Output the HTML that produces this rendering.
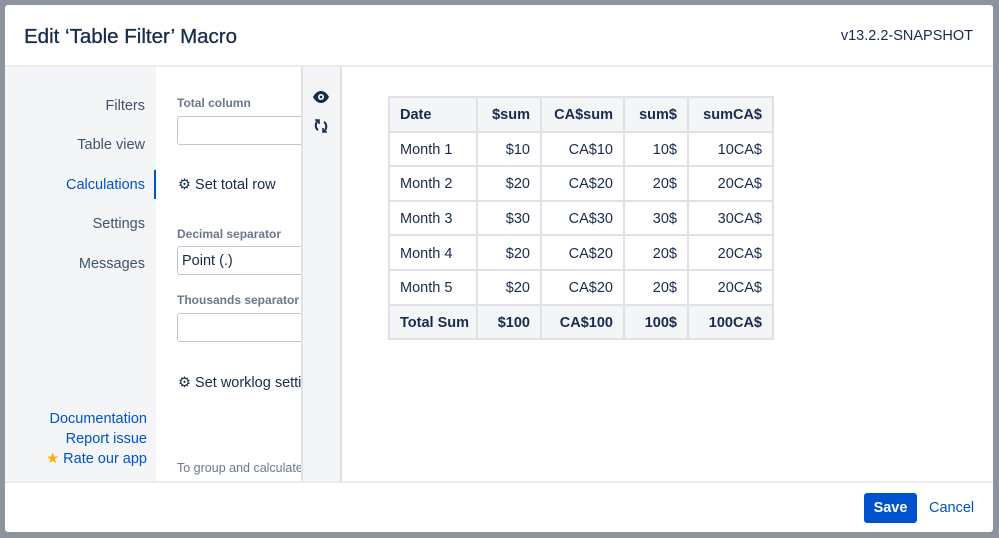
<!DOCTYPE html>
<html><head><style>
*{box-sizing:border-box;margin:0;padding:0}
body{width:999px;height:538px;background:#8e949e;font-family:"Liberation Sans",sans-serif;color:#172b4d;position:relative;overflow:hidden}
.modal{position:absolute;left:5px;top:5px;width:988px;height:527px;background:#fff;border-radius:3px;overflow:hidden}
.title{position:absolute;left:19px;top:20px;font-size:20.5px;color:#172b4d;-webkit-text-stroke:0.3px #172b4d}
.ver{position:absolute;right:20px;top:23px;font-size:14.5px;color:#172b4d}
.hdr{position:absolute;left:0;top:60px;width:100%;height:2px;background:#ebecf0}
.nav{position:absolute;left:0;top:62px;width:151px;height:414px;background:#f4f5f7}
.nav .it{position:absolute;right:11px;font-size:14.5px;color:#42526e}
.nav .act{color:#0052cc}
.bar{position:absolute;left:149px;top:165px;width:2px;height:29px;background:#0052cc}
.links{position:absolute;right:9px;font-size:14.5px;color:#0052cc;text-align:right}
.mid{position:absolute;left:152px;top:62px;width:144px;height:414px;background:#fff;overflow:hidden}
.lbl{position:absolute;left:20px;font-size:12px;font-weight:bold;color:#6b778c;white-space:nowrap}
.inp{position:absolute;left:20px;width:140px;height:29px;border:1px solid #c1c7d0;border-radius:3px;font-size:14.5px;padding:6px 4px;color:#172b4d}
.set{position:absolute;left:21px;font-size:14.5px;color:#172b4d;white-space:nowrap}
.ic{position:absolute;left:296px;top:62px;width:41px;height:414px;background:#f4f5f7;border-left:2px solid #dfe1e6;border-right:2px solid #dfe1e6}
.foot{position:absolute;left:0;top:476px;width:100%;height:2px;background:#ebecf0}
.save{position:absolute;left:864px;top:493px;width:53px;height:30px;background:#0052cc;color:#fff;font-weight:bold;font-size:14.5px;border-radius:3px;text-align:center;line-height:30px}
.cancel{position:absolute;left:929px;top:500px;font-size:14.5px;color:#0052cc}
table{position:absolute;left:383px;top:91px;width:384px;table-layout:fixed;border-collapse:collapse;font-size:14.5px;color:#172b4d}
td,th{border:2px solid #dfe1e6;height:34.6px;padding:2px 10px 0;text-align:right;white-space:nowrap}
th{background:#f4f5f7;font-weight:bold}
tr.t td{background:#f4f5f7;font-weight:bold}
td:first-child,th:first-child{text-align:left}
</style></head><body>
<div class="modal">
<div class="title">Edit ‘Table Filter’ Macro</div>
<div class="ver">v13.2.2-SNAPSHOT</div>
<div class="hdr"></div>
<div class="nav">
<div class="it" style="top:31px">Filters</div>
<div class="it" style="top:70px">Table view</div>
<div class="it act" style="top:110px">Calculations</div>
<div class="it" style="top:149px">Settings</div>
<div class="it" style="top:189px">Messages</div>
<div class="links" style="top:342px;line-height:20px">Documentation<br>Report issue<br><span style="color:#ffab00">★</span> Rate our app</div>
</div>
<div class="bar"></div>
<div class="mid">
<div class="lbl" style="top:29px">Total column</div>
<div class="inp" style="top:49px"></div>
<div class="set" style="top:110px">⚙ Set total row</div>
<div class="lbl" style="top:160px">Decimal separator</div>
<div class="inp" style="top:179px">Point (.)</div>
<div class="lbl" style="top:226px">Thousands separator</div>
<div class="inp" style="top:246px"></div>
<div class="set" style="top:308px">⚙ Set worklog settings</div>
<div style="position:absolute;left:20px;top:394px;font-size:12.5px;color:#6b778c;white-space:nowrap">To group and calculate</div>
</div>
<div class="ic">
<svg style="position:absolute;left:10px;top:24px" width="16" height="12" viewBox="0 0 16 12"><path d="M0 6C2 2 5 0 8 0s6 2 8 6c-2 4-5 6-8 6S2 10 0 6z" fill="#172b4d"/><circle cx="8" cy="6" r="3" fill="#fff"/><circle cx="8" cy="6" r="1.4" fill="#172b4d"/></svg>
<svg style="position:absolute;left:11px;top:51px" width="14" height="16" viewBox="0 0 14 16" fill="none" stroke="#172b4d" stroke-width="2"><path d="M4 3C1 5 1 10 4 12"/><path d="M10 4c3 2 3 7 0 9"/><path d="M1 2h4v4" stroke-width="1.6"/><path d="M13 14H9v-4" stroke-width="1.6"/></svg>
</div>
<table>
<colgroup><col style="width:88px"><col style="width:64px"><col style="width:83px"><col style="width:64px"><col style="width:85px"></colgroup>
<tr><th>Date</th><th>$sum</th><th>CA$sum</th><th>sum$</th><th>sumCA$</th></tr>
<tr><td>Month 1</td><td>$10</td><td>CA$10</td><td>10$</td><td>10CA$</td></tr>
<tr><td>Month 2</td><td>$20</td><td>CA$20</td><td>20$</td><td>20CA$</td></tr>
<tr><td>Month 3</td><td>$30</td><td>CA$30</td><td>30$</td><td>30CA$</td></tr>
<tr><td>Month 4</td><td>$20</td><td>CA$20</td><td>20$</td><td>20CA$</td></tr>
<tr><td>Month 5</td><td>$20</td><td>CA$20</td><td>20$</td><td>20CA$</td></tr>
<tr class="t"><td>Total Sum</td><td>$100</td><td>CA$100</td><td>100$</td><td>100CA$</td></tr>
</table>
<div class="foot"></div>
</div>
<div class="save">Save</div>
<div class="cancel">Cancel</div>
</body></html>
